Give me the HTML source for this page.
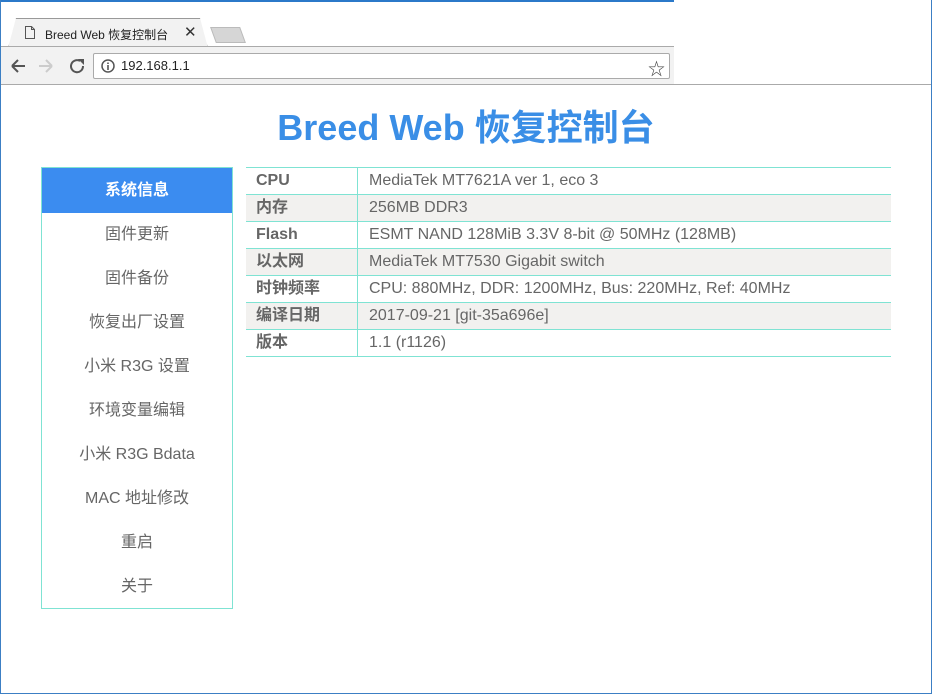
<!DOCTYPE html>
<html><head><meta charset="utf-8"><style>
*{margin:0;padding:0;box-sizing:border-box}
body{width:932px;height:694px;overflow:hidden;background:#fff;font-family:"Liberation Sans","Noto Sans CJK SC",sans-serif;position:relative}
.win{position:absolute;left:0;top:0;width:932px;height:694px;border-left:1px solid #3c7fc4;border-right:1px solid #3c7fc4;border-bottom:1px solid #3c7fc4}
.topline{position:absolute;left:0;top:0;width:674px;height:2px;background:#2b79c9}
.tab{position:absolute;left:8px;top:18px;width:200px;height:30px;background:#f2f2f2;border:1px solid #999;border-bottom:none;clip-path:polygon(4% 0,96% 0,100% 100%,0 100%);}
.tabtxt{position:absolute;left:45px;top:26px;font-size:12px;color:#222}
.newtab{position:absolute;left:213px;top:27px;width:30px;height:16px;background:#d6d6d6;border:1px solid #bbb;transform:skewX(20deg)}
.toolbar{position:absolute;left:1px;top:46px;width:673px;height:38px;background:#f2f2f2;border-top:1px solid #aaa}
.restbar{position:absolute;left:674px;top:84px;width:257px;height:1px;background:#aaa}
.tbline{position:absolute;left:1px;top:84px;width:673px;height:1px;background:#aaa}
.omni{position:absolute;left:93px;top:53px;width:577px;height:26px;background:#fff;border:1px solid #aaa;border-radius:2px}
.url{position:absolute;left:121px;top:58px;font-size:13px;color:#222}
h1{position:absolute;left:0;width:932px;top:99px;text-align:center;font-size:36px;font-weight:bold;color:#3a8ee6}
.side{position:absolute;left:41px;top:167px;width:192px;height:442px;border:1px solid #7fe3d3;padding-top:1px}
.side div{height:44px;line-height:44px;text-align:center;font-size:16px;color:#666}
.side div.act{background:#3b8cf0;color:#fff;font-weight:bold;margin-top:-1px;height:45px;line-height:45px}
.tbl{position:absolute;left:246px;top:167px;width:645px;border-top:1px solid #7fe3d3;font-size:16px;color:#666}
.r{height:27px;border-bottom:1px solid #7fe3d3;display:flex;line-height:26px}
.r:nth-child(even){background:#f2f1ef}
.k{width:112px;font-weight:bold;border-right:1px solid #7fe3d3;padding-left:10px}
.v{padding-left:11px}
</style></head><body>
<div class="topline"></div>
<div class="tab"></div>
<svg style="position:absolute;left:24px;top:25px" width="12" height="15"><path d="M1.5 1.5h6l3 3v9h-9z M7.5 1.5v3h3" fill="none" stroke="#555" stroke-width="1"/></svg>
<div class="tabtxt">Breed Web 恢复控制台</div>
<div style="position:absolute;left:184px;top:23px;font-size:15px;color:#333">✕</div>
<div class="newtab"></div>
<div class="toolbar"></div>
<div class="tbline"></div><div class="restbar"></div>
<svg style="position:absolute;left:8px;top:57px" width="80" height="18">
<path d="M4 9h13M4 9l6-6M4 9l6 6" stroke="#555" stroke-width="2" fill="none"/>
<path d="M31 9h13M44 9l-6-6M44 9l-6 6" stroke="#ccc" stroke-width="2" fill="none"/>
<path d="M72 4a6 6 0 1 0 3 5" stroke="#555" stroke-width="2" fill="none"/><path d="M70 2h6v6z" fill="#555"/>
</svg>
<div class="omni"></div>
<svg style="position:absolute;left:100px;top:58px" width="16" height="16"><circle cx="8" cy="8" r="6" fill="none" stroke="#555" stroke-width="1.5"/><path d="M8 7v5M8 4.5v1.5" stroke="#555" stroke-width="1.6"/></svg>
<div class="url">192.168.1.1</div>
<div style="position:absolute;left:648px;top:55px;font-size:17px;color:#444">☆</div>
<div class="win"></div>
<h1>Breed Web 恢复控制台</h1>
<div class="side">
<div class="act">系统信息</div><div>固件更新</div><div>固件备份</div><div>恢复出厂设置</div><div>小米 R3G 设置</div><div>环境变量编辑</div><div>小米 R3G Bdata</div><div>MAC 地址修改</div><div>重启</div><div>关于</div>
</div>
<div class="tbl">
<div class="r"><div class="k">CPU</div><div class="v">MediaTek MT7621A ver 1, eco 3</div></div>
<div class="r"><div class="k">内存</div><div class="v">256MB DDR3</div></div>
<div class="r"><div class="k">Flash</div><div class="v">ESMT NAND 128MiB 3.3V 8-bit @ 50MHz (128MB)</div></div>
<div class="r"><div class="k">以太网</div><div class="v">MediaTek MT7530 Gigabit switch</div></div>
<div class="r"><div class="k">时钟频率</div><div class="v">CPU: 880MHz, DDR: 1200MHz, Bus: 220MHz, Ref: 40MHz</div></div>
<div class="r"><div class="k">编译日期</div><div class="v">2017-09-21 [git-35a696e]</div></div>
<div class="r"><div class="k">版本</div><div class="v">1.1 (r1126)</div></div>
</div>
</body></html>
